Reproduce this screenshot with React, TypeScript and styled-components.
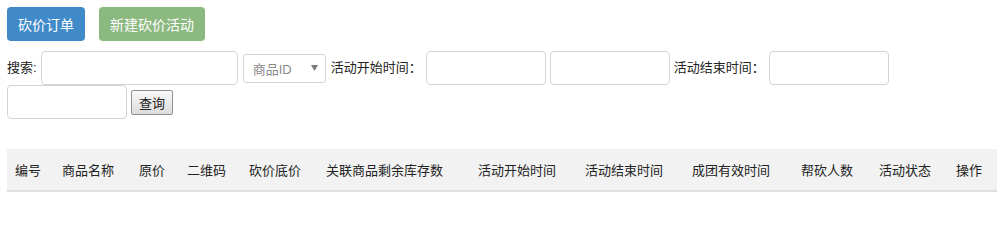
import React from 'react';
import styled, { createGlobalStyle } from 'styled-components';

const GlobalStyle = createGlobalStyle`
  body {
    margin: 0;
    background: #fff;
    font-family: "Liberation Sans", "Noto Sans CJK SC", sans-serif;
    color: #222;
  }
`;

const Page = styled.div`
  padding: 7px;
`;

const Toolbar = styled.div`
  display: flex;
  gap: 14px;
`;

const ActionButton = styled.button<{ $tone: 'blue' | 'green' }>`
  height: 34px;
  padding: 0 11px;
  border: none;
  border-radius: 4px;
  background: ${({ $tone }) => ($tone === 'blue' ? '#418aca' : '#8bb980')};
  color: #fff;
  font-family: "Noto Sans CJK SC", sans-serif;
  font-size: 14px;
  line-height: 34px;
`;

const FilterBar = styled.div`
  display: flex;
  flex-wrap: wrap;
  align-items: center;
  column-gap: 4px;
  margin-top: 10px;
  font-size: 13px;
`;

const Label = styled.span`
  font-family: "Liberation Sans", "Noto Sans CJK SC", sans-serif;
  font-size: 13px;
  line-height: 34px;
  color: #222;
`;

const TextInput = styled.input<{ $w: number }>`
  box-sizing: border-box;
  width: ${({ $w }) => $w}px;
  height: 34px;
  padding: 0 8px;
  border: 1px solid #d4d4d4;
  border-radius: 4px;
  background: #fff;
  outline: none;
`;

const Select = styled.div`
  box-sizing: border-box;
  display: flex;
  align-items: center;
  justify-content: space-between;
  width: 83px;
  height: 29px;
  margin: 0 1px;
  padding: 0 7px 0 9px;
  border: 1px solid #d4d4d4;
  border-radius: 3px;
  color: #8a8a8a;
  font-family: "Liberation Sans", "Noto Sans CJK SC", sans-serif;
  font-size: 13px;
`;

const QueryButton = styled.button`
  height: 25px;
  padding: 0 7px;
  border: 1px solid #8f8f8f;
  border-radius: 2px;
  background: linear-gradient(#f8f8f8, #dcdcdc);
  color: #222;
  font-family: "Noto Sans CJK SC", sans-serif;
  font-size: 13px;
  line-height: 23px;
`;

const Table = styled.table`
  margin-top: 30px;
  width: 990px;
  table-layout: fixed;
  border-collapse: collapse;
`;

const HeadCell = styled.th<{ $w: number }>`
  width: ${({ $w }) => $w}px;
  height: 42px;
  padding: 0 8px;
  box-sizing: border-box;
  background: #f2f2f2;
  border-bottom: 2px solid #e0e0e0;
  text-align: left;
  font-family: "Noto Sans CJK SC", sans-serif;
  font-size: 13px;
  font-weight: normal;
  color: #222;
  white-space: nowrap;
`;

const columns: [string, number][] = [
  ['编号', 47],
  ['商品名称', 77],
  ['原价', 48],
  ['二维码', 62],
  ['砍价底价', 77],
  ['关联商品剩余库存数', 152],
  ['活动开始时间', 107],
  ['活动结束时间', 107],
  ['成团有效时间', 109],
  ['帮砍人数', 78],
  ['活动状态', 77],
  ['操作', 49],
];

const Arrow = () => (
  <svg width="7" height="6" viewBox="0 0 7 6">
    <path d="M0 0 L7 0 L3.5 6 Z" fill="#7a7a7a" />
  </svg>
);

export default function App() {
  return (
    <Page>
      <GlobalStyle />
      <Toolbar>
        <ActionButton $tone="blue">砍价订单</ActionButton>
        <ActionButton $tone="green">新建砍价活动</ActionButton>
      </Toolbar>

      <FilterBar>
        <Label>搜索:</Label>
        <TextInput $w={197} />
        <Select>
          <span>商品ID</span>
          <Arrow />
        </Select>
        <Label>活动开始时间：</Label>
        <TextInput $w={120} />
        <TextInput $w={120} />
        <Label>活动结束时间：</Label>
        <TextInput $w={120} />
        <TextInput $w={120} />
        <QueryButton>查询</QueryButton>
      </FilterBar>

      <Table>
        <thead>
          <tr>
            {columns.map(([title, w]) => (
              <HeadCell key={title} $w={w}>
                {title}
              </HeadCell>
            ))}
          </tr>
        </thead>
      </Table>
    </Page>
  );
}
